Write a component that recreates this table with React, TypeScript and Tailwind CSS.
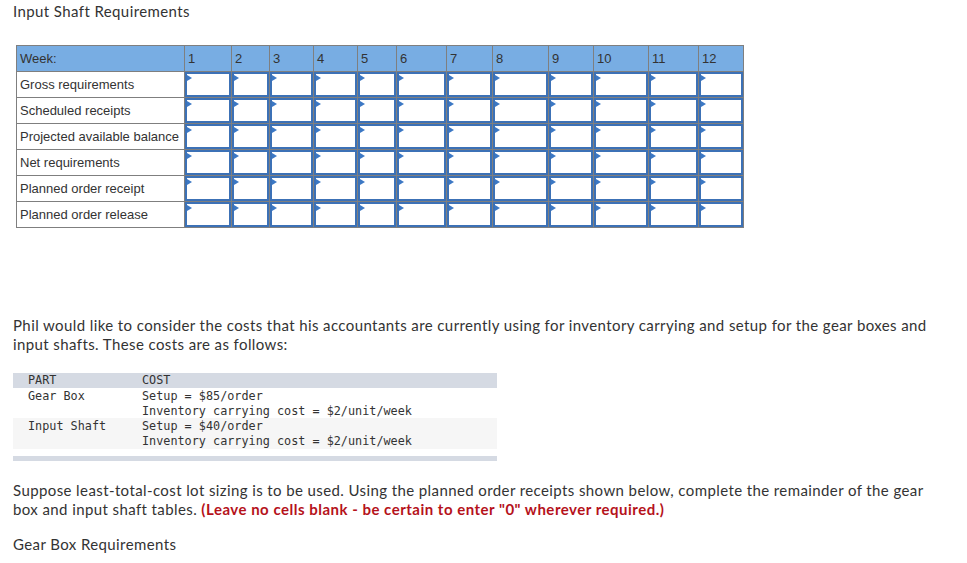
const weeks = ["1", "2", "3", "4", "5", "6", "7", "8", "9", "10", "11", "12"]

const rows = [
  "Gross requirements",
  "Scheduled receipts",
  "Projected available balance",
  "Net requirements",
  "Planned order receipt",
  "Planned order release",
]

function InputCell() {
  return (
    <div className="relative h-full w-full border-2 border-[#3c71b6] bg-white">
      <span className="absolute left-0 top-[1px] h-0 w-0 border-y-[3px] border-l-[5px] border-y-transparent border-l-[#3c78c4]" />
    </div>
  )
}

export default function App() {
  return (
    <div className="min-h-[563px] bg-white pl-[13px] text-[#333] font-['Lato',sans-serif] tracking-[0.4px]">
      <div className="pt-px text-[15px] leading-5">Input Shaft Requirements</div>

      <div className="ml-[3px] mt-6 grid w-max grid-cols-[167px_46px_37px_43px_43px_38px_49px_45px_55px_44px_54px_49px_44px] auto-rows-[25px] gap-px border border-[#7f7f7f] bg-[#7f7f7f] font-['Liberation_Sans',Arial,sans-serif] text-[13px] tracking-normal text-[#333]">
        <div className="flex items-center bg-[#78ade3] pl-[3px]">Week:</div>
        {weeks.map((w) => (
          <div key={w} className="flex items-center bg-[#78ade3] pl-[3px]">
            {w}
          </div>
        ))}
        {rows.map((r) => (
          <>
            <div key={r} className="flex items-center bg-white pl-[3px]">
              {r}
            </div>
            {weeks.map((w) => (
              <InputCell key={r + w} />
            ))}
          </>
        ))}
      </div>

      <p className="mt-[88px] max-w-[935px] text-[15px] leading-[19px]">
        Phil would like to consider the costs that his accountants are currently using for inventory carrying and setup for the gear boxes and input shafts. These costs are as follows:
      </p>

      <div className="mt-[19px] w-[484px] font-['DejaVu_Sans_Mono',monospace] text-[11.8px] leading-[15px] tracking-normal text-[#333]">
        <div className="flex h-[15px] items-end bg-[#d5dae3]">
          <span className="w-[129px] pl-[15px]">PART</span>
          <span>COST</span>
        </div>
        <div className="flex bg-white pt-px">
          <span className="w-[129px] pl-[15px]">Gear Box</span>
          <span className="whitespace-pre">
            Setup = $85/order
            <br />
            Inventory carrying cost = $2/unit/week
          </span>
        </div>
        <div className="-mt-px flex bg-[#f6f6f6] pt-px">
          <span className="w-[129px] pl-[15px]">Input Shaft</span>
          <span className="whitespace-pre">
            Setup = $40/order
            <br />
            Inventory carrying cost = $2/unit/week
          </span>
        </div>
        <div className="mt-[7px] h-[5px] bg-[#d5dae3]" />
      </div>

      <p className="mt-[20px] max-w-[935px] text-[15px] leading-[19px]">
        Suppose least-total-cost lot sizing is to be used. Using the planned order receipts shown below, complete the remainder of the gear box and input shaft tables.{" "}
        <span className="font-bold tracking-[0.5px] text-[#b5121b]">(Leave no cells blank - be certain to enter "0" wherever required.)</span>
      </p>

      <div className="mt-[15px] text-[15px] leading-5">Gear Box Requirements</div>
    </div>
  )
}
